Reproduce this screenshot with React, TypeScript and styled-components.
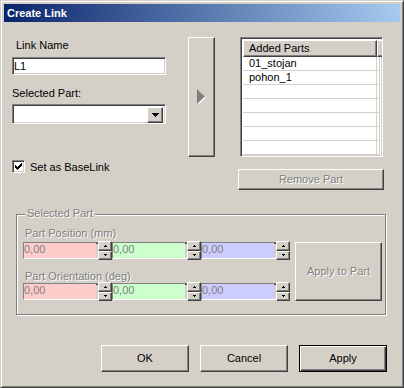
import React from 'react'
import styled, { createGlobalStyle, css } from 'styled-components'

const GlobalStyle = createGlobalStyle`
  html, body {
    margin: 0;
    padding: 0;
    background: #d4d0c8;
  }
  body {
    font-family: "Liberation Sans", Arial, sans-serif;
    font-size: 11px;
    color: #000;
  }
  * {
    box-sizing: border-box;
  }
`

const raised = css`
  border: 1px solid;
  border-color: #fff #404040 #404040 #fff;
  box-shadow: inset -1px -1px #808080, inset 1px 1px #d4d0c8;
  background: #d4d0c8;
`
const sunken = css`
  border: 1px solid;
  border-color: #808080 #fff #fff #808080;
  box-shadow: inset 1px 1px #404040, inset -1px -1px #d4d0c8;
`
const disabledText = css`
  color: #808080;
  text-shadow: 1px 1px 0 #fff;
`

const Window = styled.div`
  width: 404px;
  height: 388px;
  border: 1px solid;
  border-color: #d4d0c8 #404040 #404040 #d4d0c8;
  box-shadow: inset 1px 1px #fff, inset -1px -1px #808080;
  padding: 3px;
  background: #d4d0c8;
  display: flex;
  flex-direction: column;
`
const TitleBar = styled.div`
  height: 18px;
  margin-bottom: 1px;
  padding-left: 3px;
  background: linear-gradient(to right, #0a246a, #a6caf0);
  color: #fff;
  font-weight: bold;
  font-size: 11px;
  line-height: 18px;
`
const Body = styled.div`
  display: flex;
  flex-direction: column;
  padding: 14px 13px 0 8px;
`
const TopRow = styled.div`
  display: flex;
  align-items: flex-start;
`
const LeftCol = styled.div`
  width: 154px;
  padding-top: 2px;
  display: flex;
  flex-direction: column;
`
const FieldLabel = styled.div<{ $indent?: number; $gap?: number }>`
  line-height: 13px;
  height: 13px;
  padding-left: ${(p) => p.$indent ?? 0}px;
  margin-top: ${(p) => p.$gap ?? 0}px;
  white-space: nowrap;
`
const TextInput = styled.div`
  ${sunken};
  margin-top: 5px;
  height: 18px;
  background: #fff;
  padding: 1px 0 0 1px;
  line-height: 14px;
`
const Combo = styled.div`
  ${sunken};
  margin-top: 4px;
  height: 20px;
  background: #fff;
  padding: 2px;
  display: flex;
  justify-content: flex-end;
`
const DropButton = styled.div`
  ${raised};
  width: 16px;
  height: 16px;
  display: flex;
  align-items: center;
  justify-content: center;
`
const CheckRow = styled.div`
  margin-top: 36px;
  height: 13px;
  display: flex;
  align-items: center;
  gap: 5px;
`
const CheckBox = styled.div`
  ${sunken};
  width: 13px;
  height: 13px;
  background: #fff;
  display: flex;
  align-items: center;
  justify-content: center;
`
const ArrowButton = styled.div`
  ${raised};
  width: 27px;
  height: 120px;
  margin-left: 22px;
  display: flex;
  align-items: center;
  justify-content: center;
`
const RightCol = styled.div`
  width: 146px;
  margin-left: 23px;
  display: flex;
  flex-direction: column;
`
const ListBox = styled.div`
  ${sunken};
  width: 143px;
  height: 120px;
  margin-left: 2px;
  padding: 2px;
  background: #fff;
  overflow: hidden;
`
const ListHeader = styled.div`
  display: flex;
  height: 17px;
`
const HeaderCell = styled.div<{ $width?: number }>`
  ${raised};
  width: ${(p) => (p.$width ? `${p.$width}px` : 'auto')};
  flex: ${(p) => (p.$width ? 'none' : '1')};
  padding-left: 5px;
  line-height: 14px;
`
const ListRow = styled.div`
  display: flex;
  height: 14px;
  border-bottom: 1px solid #d4d0c8;
`
const ListCell = styled.div`
  width: 134px;
  border-right: 1px solid #d4d0c8;
  padding-left: 6px;
  line-height: 13px;
`
const RowTail = styled.div`
  flex: 1;
  border-right: 1px solid #d4d0c8;
`
const PushButton = styled.div<{ $width: number; $height: number; $disabled?: boolean; $default?: boolean }>`
  ${raised};
  width: ${(p) => p.$width}px;
  height: ${(p) => p.$height}px;
  display: flex;
  align-items: center;
  justify-content: center;
  text-align: center;
  line-height: 13px;
  ${(p) => p.$disabled && disabledText};
  ${(p) =>
    p.$default &&
    css`
      border: 1px solid #000;
      box-shadow: inset 1px 1px #fff, inset -1px -1px #404040, inset -2px -2px #808080;
    `};
`
const RemoveWrap = styled.div`
  margin-top: 12px;
`
const GroupBox = styled.div`
  position: relative;
  margin: 24px 0 0 4px;
  width: 370px;
  height: 101px;
  border: 1px solid #808080;
  box-shadow: inset 1px 1px #fff, 1px 1px #fff;
  padding: 12px 0 0 6px;
  display: flex;
  align-items: flex-start;
`
const GroupLegend = styled.div`
  position: absolute;
  top: -8px;
  left: 8px;
  padding: 0 2px;
  background: #d4d0c8;
  line-height: 13px;
  ${disabledText};
`
const ValuesCol = styled.div`
  display: flex;
  flex-direction: column;
`
const GroupLabel = styled.div<{ $gap: number }>`
  line-height: 13px;
  height: 13px;
  padding-left: 2px;
  margin-top: ${(p) => p.$gap}px;
  ${disabledText};
`
const SpinRow = styled.div<{ $gap: number }>`
  display: flex;
  gap: 1px;
  margin-top: ${(p) => p.$gap}px;
`
const SpinBox = styled.div`
  ${sunken};
  width: 88px;
  height: 17px;
  display: flex;
`
const SpinField = styled.div<{ $tint: string }>`
  flex: 1;
  margin-right: 2px;
  background: ${(p) => p.$tint};
  color: #808080;
  line-height: 13px;
  padding-left: 0;
`
const SpinButtons = styled.div`
  width: 14px;
  margin: -2px -2px -2px 0;
  display: flex;
  flex-direction: column;
`
const SpinButton = styled.div`
  ${raised};
  flex: 1;
  display: flex;
  align-items: center;
  justify-content: center;
`
const ApplyPartWrap = styled.div`
  margin: 15px 0 0 6px;
`
const ButtonBar = styled.div`
  display: flex;
  justify-content: flex-end;
  gap: 11px;
  margin-top: 30px;
`

function Triangle({ dir, size }: { dir: 'up' | 'down'; size: number }) {
  const w = size * 2 - 1
  const pts = dir === 'down' ? `0,0 ${w},0 ${w / 2},${size}` : `0,${size} ${w},${size} ${w / 2},0`
  return (
    <svg width={w} height={size} viewBox={`0 0 ${w} ${size}`} shapeRendering="crispEdges">
      <polygon points={pts} fill="#000" />
    </svg>
  )
}

function CheckMark() {
  const rows: [number, number][][] = [
    [[6, 1]],
    [[5, 2]],
    [[0, 1], [4, 3]],
    [[0, 2], [3, 3]],
    [[0, 5]],
    [[1, 3]],
    [[2, 1]],
  ]
  return (
    <svg width="7" height="7" viewBox="0 0 7 7" shapeRendering="crispEdges">
      {rows.map((segs, y) =>
        segs.map(([x, len]) => <rect key={`${y}-${x}`} x={x} y={y} width={len} height={1} fill="#000" />)
      )}
    </svg>
  )
}

function SpinEdit({ tint }: { tint: string }) {
  return (
    <SpinBox>
      <SpinField $tint={tint}>0,00</SpinField>
      <SpinButtons>
        <SpinButton>
          <Triangle dir="up" size={2} />
        </SpinButton>
        <SpinButton>
          <Triangle dir="down" size={2} />
        </SpinButton>
      </SpinButtons>
    </SpinBox>
  )
}

const tints = ['#ffcccc', '#ccffcc', '#ccccff']
const parts = ['01_stojan', 'pohon_1', '', '', '', '', '', '']

export default function App() {
  return (
    <>
      <GlobalStyle />
      <Window>
        <TitleBar>Create Link</TitleBar>
        <Body>
          <TopRow>
            <LeftCol>
              <FieldLabel $indent={4}>Link Name</FieldLabel>
              <TextInput>L1</TextInput>
              <FieldLabel $gap={12}>Selected Part:</FieldLabel>
              <Combo>
                <DropButton>
                  <Triangle dir="down" size={4} />
                </DropButton>
              </Combo>
              <CheckRow>
                <CheckBox>
                  <CheckMark />
                </CheckBox>
                <span>Set as BaseLink</span>
              </CheckRow>
            </LeftCol>
            <ArrowButton>
              <svg width="9" height="16" viewBox="0 0 9 16">
                <polygon points="1,1 9,8.5 1,16" fill="#fff" />
                <polygon points="0,0 8,7.5 0,15" fill="#808080" />
              </svg>
            </ArrowButton>
            <RightCol>
              <ListBox>
                <ListHeader>
                  <HeaderCell $width={134}>Added Parts</HeaderCell>
                  <HeaderCell />
                </ListHeader>
                {parts.map((p, i) => (
                  <ListRow key={i}>
                    <ListCell>{p}</ListCell>
                    <RowTail />
                  </ListRow>
                ))}
              </ListBox>
              <RemoveWrap>
                <PushButton $width={146} $height={21} $disabled>
                  Remove Part
                </PushButton>
              </RemoveWrap>
            </RightCol>
          </TopRow>
          <GroupBox>
            <GroupLegend>Selected Part</GroupLegend>
            <ValuesCol>
              <GroupLabel $gap={0}>Part Position (mm)</GroupLabel>
              <SpinRow $gap={2}>
                {tints.map((t) => (
                  <SpinEdit key={t} tint={t} />
                ))}
              </SpinRow>
              <GroupLabel $gap={11}>Part Orientation (deg)</GroupLabel>
              <SpinRow $gap={0}>
                {tints.map((t) => (
                  <SpinEdit key={t} tint={t} />
                ))}
              </SpinRow>
            </ValuesCol>
            <ApplyPartWrap>
              <PushButton $width={87} $height={59} $disabled>
                Apply to Part
              </PushButton>
            </ApplyPartWrap>
          </GroupBox>
          <ButtonBar>
            <PushButton $width={88} $height={27}>
              OK
            </PushButton>
            <PushButton $width={88} $height={27}>
              Cancel
            </PushButton>
            <PushButton $width={88} $height={27} $default>
              Apply
            </PushButton>
          </ButtonBar>
        </Body>
      </Window>
    </>
  )
}
